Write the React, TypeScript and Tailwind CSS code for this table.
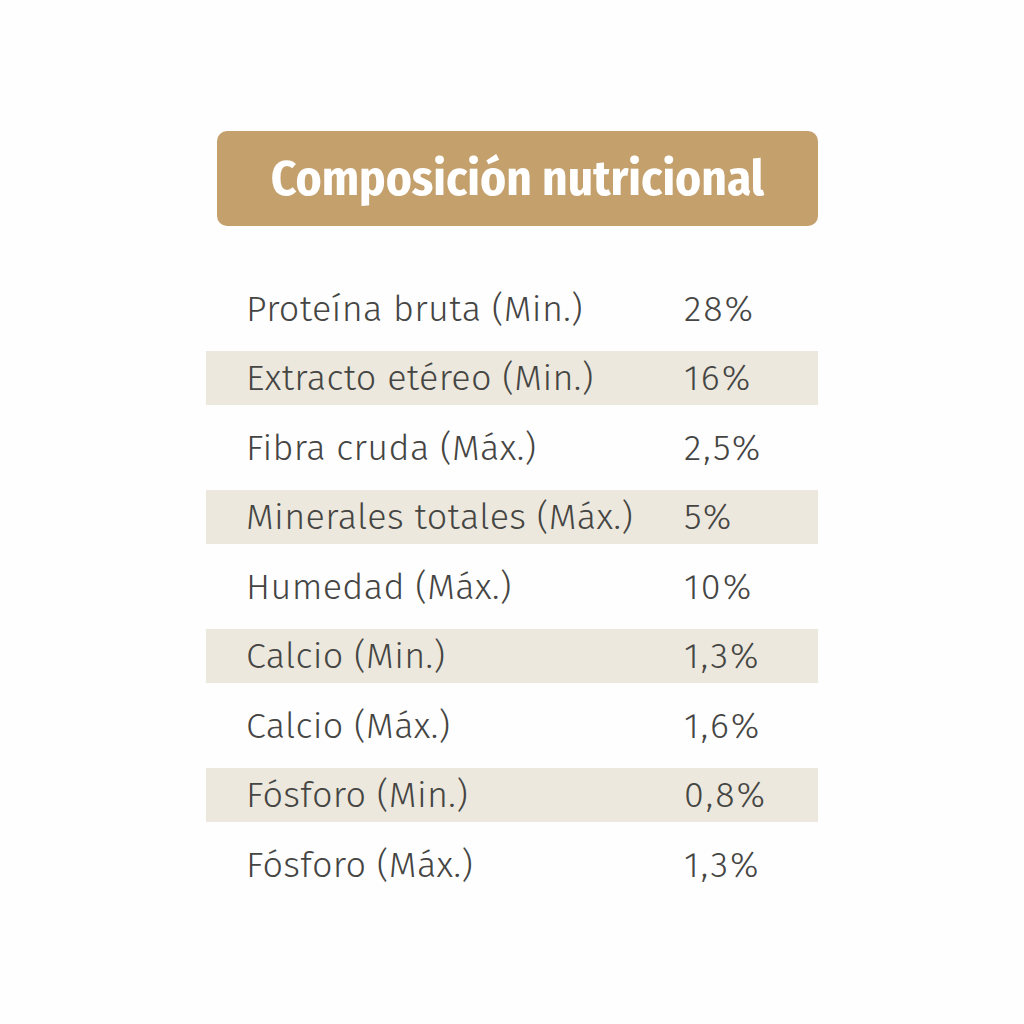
import React from "react";

const rows: [string, string][] = [
  ["Proteína bruta (Min.)", "28%"],
  ["Extracto etéreo (Min.)", "16%"],
  ["Fibra cruda (Máx.)", "2,5%"],
  ["Minerales totales (Máx.)", "5%"],
  ["Humedad (Máx.)", "10%"],
  ["Calcio (Min.)", "1,3%"],
  ["Calcio (Máx.)", "1,6%"],
  ["Fósforo (Min.)", "0,8%"],
  ["Fósforo (Máx.)", "1,3%"],
];

export default function App() {
  return (
    <div className="w-[1024px] h-[1024px] bg-[#fefefe] pt-[131px] pl-[206px]" style={{ fontFamily: '"Fira Sans", "Open Sans", "Noto Sans", sans-serif' }}>
      <div className="w-[612px]">
        <div className="ml-[11px] w-[601px] h-[95px] rounded-[10px] bg-[#c4a06d] flex items-center justify-center">
          <span className="text-white font-bold text-[49px] leading-none" style={{ fontFamily: '"Fira Sans Condensed", "Fira Sans", sans-serif' }}>
            Composición nutricional
          </span>
        </div>
        <div className="mt-[40px] flex flex-col">
          {rows.map(([label, value], i) => (
            <div
              key={i}
              className={
                i % 2 === 1
                  ? "h-[54px] bg-[#ece8dd] grid grid-cols-[438px_1fr] items-center pl-[40px]"
                  : "h-[85px] grid grid-cols-[438px_1fr] items-center pl-[40px]"
              }
            >
              <span className="text-[36px] text-[#454543] leading-none font-light tracking-[0.35px]">{label}</span>
              <span className="text-[36px] text-[#454543] leading-none font-light tracking-[2px]">{value}</span>
            </div>
          ))}
        </div>
      </div>
    </div>
  );
}
